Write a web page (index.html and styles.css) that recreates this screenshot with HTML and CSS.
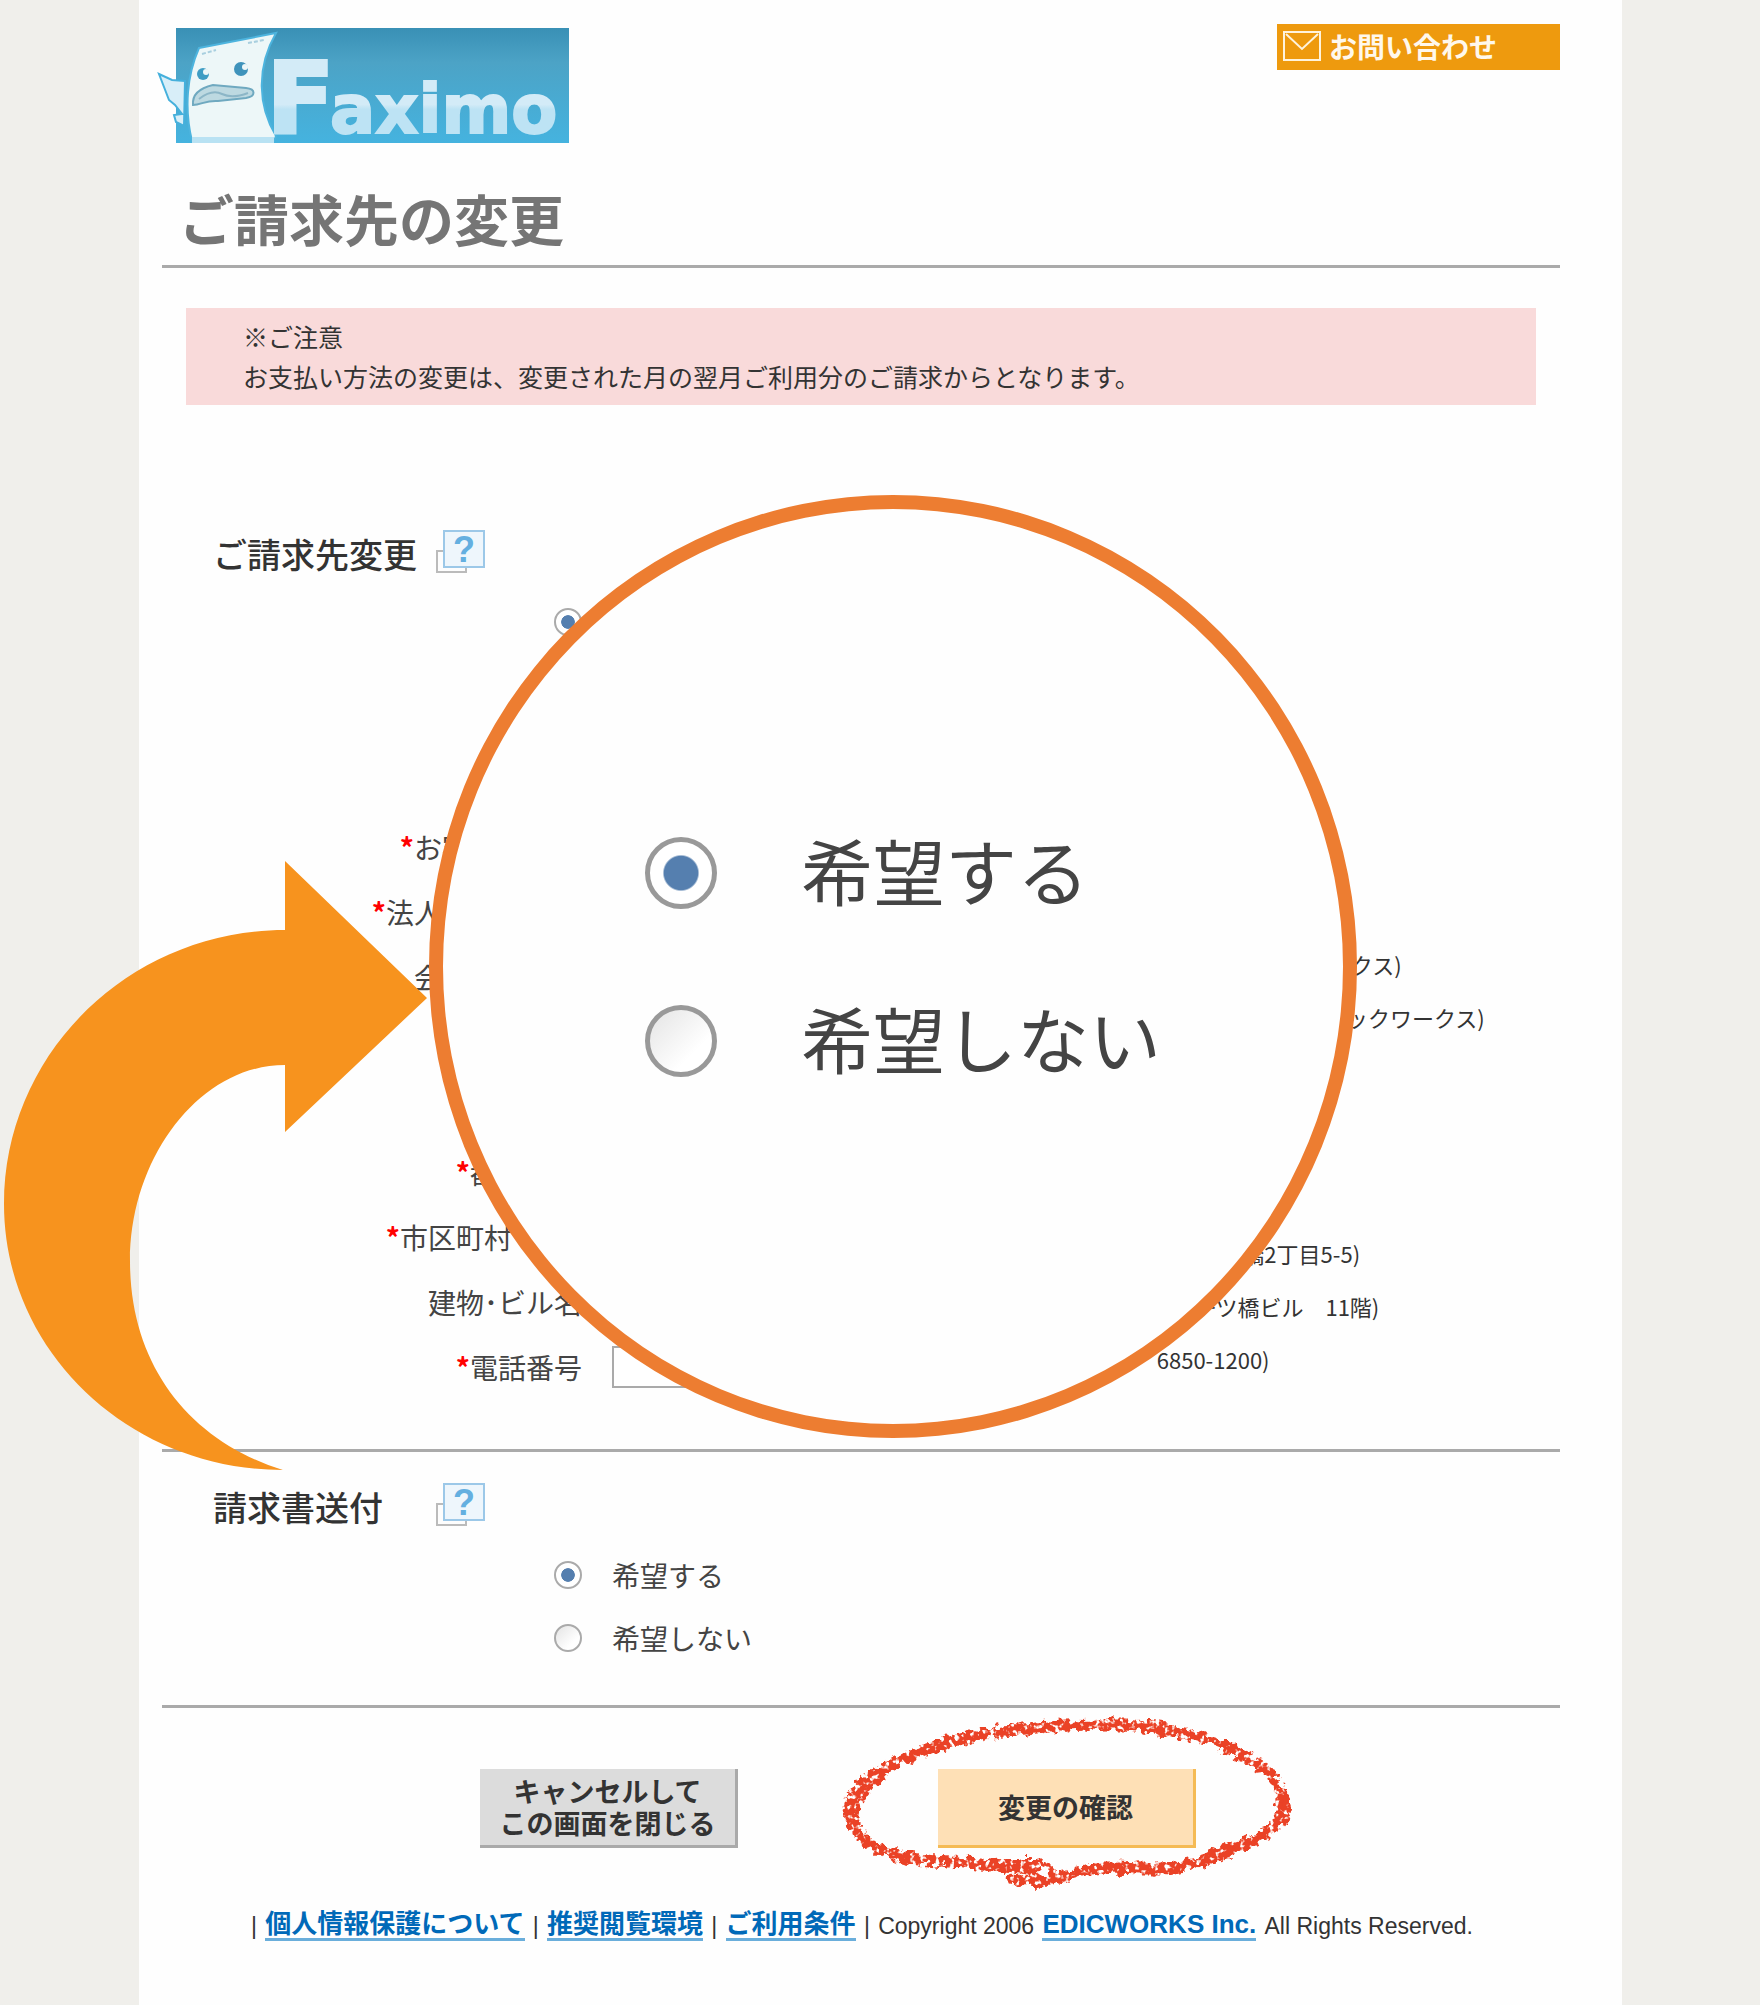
FILE: index.html
```html
<!DOCTYPE html>
<html lang="ja">
<head>
    <meta charset="UTF-8">
    <meta name="viewport" content="width=device-width, initial-scale=1.0">
    <title>ご請求先の変更 - Faximo</title>
    <link rel="stylesheet" href="styles.css">
</head>
<body>
    <div class="sheet">
        <header class="header">
            <svg class="logo" width="411" height="116" viewBox="0 0 411 116" role="img" aria-label="Faximo">
                <defs>
                    <linearGradient id="sea" x1="0" y1="0" x2="0" y2="1">
                        <stop offset="0" stop-color="#3990b5"/>
                        <stop offset="0.3" stop-color="#4ca3c6"/>
                        <stop offset="1" stop-color="#45b3df"/>
                    </linearGradient>
                    <linearGradient id="letters" gradientUnits="userSpaceOnUse" x1="0" y1="0" x2="0" y2="116">
                        <stop offset="0.66" stop-color="#d3ebf7"/>
                        <stop offset="0.7" stop-color="#bde3f4"/>
                    </linearGradient>
                </defs>
                <rect x="18" y="0" width="393" height="115" fill="url(#sea)"/>
                <!-- fish -->
                <path d="M1 46 L14 52 L27 53 L26 98 L18 94 L16 87 L24 86 L17 77 L11 72 L6 59 Z" fill="#d8eef8" stroke="#45b0dc" stroke-width="2"/>
                <path d="M41 20 L118 5 C98 40 100 78 118 108 L116 113 H34 C26 80 29 47 41 20 Z" fill="#edf7f8" stroke="#4db4de" stroke-width="2"/>
                <path d="M34 109 H116 V115 H34 Z" fill="#b9e2f3"/>
                <circle cx="45" cy="46" r="6" fill="#3f9dc4"/>
                <circle cx="48" cy="44" r="3" fill="#edf7f8"/>
                <circle cx="83" cy="41" r="7" fill="#3f93bb"/>
                <circle cx="87" cy="39" r="3" fill="#edf7f8"/>
                <path d="M35 77 C34 66 42 60 55 57 L88 60 C98 61 98 68 88 70 L60 73 C48 72 43 77 35 77 Z" fill="#bdd9e1" stroke="#6fa9c0" stroke-width="2"/>
                <path d="M41 71 Q54 61 64 66 T90 65" fill="none" stroke="#8cb6c7" stroke-width="2"/>
                <path d="M44 26 L58 22 M90 15 L106 12" fill="none" stroke="#a8cfdf" stroke-width="2" stroke-dasharray="4 2"/>
                <g class="logo-text" fill="url(#letters)" stroke="url(#letters)" stroke-linejoin="miter">
                    <text x="109" y="104" font-size="98" stroke-width="4">F</text>
                    <text x="172" y="105" font-size="67" stroke-width="2">aximo</text>
                </g>
            </svg>
            <a class="contact" href="#">
                <svg width="38" height="30" viewBox="0 0 38 30" fill="none" stroke="#fff3dc" stroke-width="2">
                    <rect x="1" y="1" width="36" height="28"/>
                    <path d="M3 3 L19 18 L35 3"/>
                </svg>
                お問い合わせ
            </a>
        </header>

        <h1>ご請求先の変更</h1>

        <div class="notice">
            ※ご注意<br>
            お支払い方法の変更は、変更された月の翌月ご利用分のご請求からとなります。
        </div>

        <form>
            <!-- 請求先 -->
            <section class="billing">
                <div class="section-title">
                    <h2>ご請求先変更</h2>
                    <a href="#" aria-label="ヘルプ">
                        <svg class="help" width="50" height="45" viewBox="0 0 50 45">
                            <rect x="2" y="22" width="29" height="21" fill="#fdfdfd" stroke="#bbb" stroke-width="2"/>
                            <rect x="9" y="2" width="40" height="36" fill="#eef6fc" stroke="#9cc8e8" stroke-width="2"/>
                            <text x="29" y="33" text-anchor="middle" fill="#64afe0">?</text>
                        </svg>
                    </a>
                </div>
                <div class="radio-row">
                    <input class="radio" type="radio" name="change" aria-label="変更する" checked>
                </div>
                <div class="billing-body">
                    <div class="fields">
                        <div class="field"><label for="type"><span class="req">*</span>お客様の区分</label><input id="type" type="text"></div>
                        <div class="field"><label for="corp"><span class="req">*</span>法人個人の区分</label><input id="corp" type="text"></div>
                        <div class="field"><label for="company">会社団体名称</label><input id="company" type="text"></div>
                        <div class="field"><label for="kana">フリガナ</label><input id="kana" type="text"></div>
                        <div class="field"><label for="zip">郵便番号</label><input id="zip" type="text"></div>
                        <div class="field"><label for="pref"><span class="req">*</span>都道府県</label><input id="pref" type="text"></div>
                        <div class="field"><label for="city"><span class="req">*</span>市区町村･番地</label><input id="city" type="text"></div>
                        <div class="field"><label for="building">建物･ビル名</label><input id="building" type="text"></div>
                        <div class="field"><label for="tel"><span class="req">*</span>電話番号</label><input id="tel" type="text"></div>
                    </div>
                    <div class="hints">
                        <div class="hint-group">
                            <p>(例 株式会社エディックワークス)</p>
                            <p>(例カブシキカイシャエディックワークス)</p>
                        </div>
                        <div class="hint-group">
                            <p>(例 千代田区一ツ橋2丁目5-5)</p>
                            <p>(例岩波書店一ツ橋ビル　11階)</p>
                            <p>(例 03　6850-1200)</p>
                        </div>
                    </div>
                </div>
            </section>

            <!-- 請求書送付 -->
            <section class="invoice">
                <div class="section-title">
                    <h2>請求書送付</h2>
                    <a href="#" aria-label="ヘルプ">
                        <svg class="help" width="50" height="45" viewBox="0 0 50 45">
                            <rect x="2" y="22" width="29" height="21" fill="#fdfdfd" stroke="#bbb" stroke-width="2"/>
                            <rect x="9" y="2" width="40" height="36" fill="#eef6fc" stroke="#9cc8e8" stroke-width="2"/>
                            <text x="29" y="33" text-anchor="middle" fill="#64afe0">?</text>
                        </svg>
                    </a>
                </div>
                <label class="radio-row"><input class="radio" type="radio" name="invoice" checked>希望する</label>
                <label class="radio-row"><input class="radio" type="radio" name="invoice">希望しない</label>
            </section>

            <div class="buttons">
                <button type="button" class="btn cancel">キャンセルして<br>この画面を閉じる</button>
                <div class="confirm-wrap">
                    <button type="submit" class="btn confirm">変更の確認</button>
                    <svg class="crayon" width="470" height="190" viewBox="830 1704 470 190" fill="none" stroke="#ea4227" stroke-linecap="round">
                        <defs>
                            <filter id="rough" x="-5%" y="-10%" width="110%" height="120%">
                                <feTurbulence type="fractalNoise" baseFrequency="0.12" numOctaves="3" seed="4" result="n"/>
                                <feDisplacementMap in="SourceGraphic" in2="n" scale="14" xChannelSelector="R" yChannelSelector="G" result="d"/>
                                <feTurbulence type="fractalNoise" baseFrequency="0.2" numOctaves="2" seed="9"/>
                                <feColorMatrix type="matrix" values="0 0 0 0 0  0 0 0 0 0  0 0 0 0 0  0 0 0 -7 4.9"/>
                                <feComposite in="d" operator="in"/>
                            </filter>
                        </defs>
                        <g filter="url(#rough)">
                            <path stroke-width="11" d="M1012 1879 C1040 1886 1065 1876 1085 1871 C1110 1864 1140 1872 1175 1868 C1210 1862 1245 1846 1265 1834 C1285 1818 1288 1798 1272 1778 C1245 1748 1200 1731 1125 1725 C1060 1724 980 1729 925 1750 C880 1767 850 1787 849 1810 C852 1838 875 1850 905 1857 C945 1864 985 1862 1035 1870"/>
                            <path stroke-width="6" d="M1020 1882 C1050 1882 1065 1870 1040 1862 L1005 1862 M862 1835 C848 1812 860 1795 890 1768 C930 1742 960 1732 1010 1728 M1230 1746 C1270 1770 1298 1800 1284 1820 C1270 1838 1240 1842 1212 1852"/>
                        </g>
                    </svg>
                </div>
            </div>
        </form>

        <footer class="footer">
            <span>|</span>
            <a href="#">個人情報保護について</a>
            <span>|</span>
            <a href="#">推奨閲覧環境</a>
            <span>|</span>
            <a href="#">ご利用条件</a>
            <span>|</span>
            <span>Copyright 2006</span>
            <a href="#">EDICWORKS Inc.</a>
            <span>All Rights Reserved.</span>
        </footer>
    </div>

    <!-- 拡大表示 -->
    <svg class="arrow" width="430" height="620" viewBox="0 855 430 620">
        <path fill="#f7931e" d="M285 861 L427 998 L285 1132 V1065 C200 1065 130 1157 130 1261 C130 1366 190 1441 283 1470 C129 1470 4 1351 4 1204 C4 1053 130 930 285 930 Z"/>
    </svg>
    <div class="magnifier">
        <label class="zoom-row"><input class="radio" type="radio" name="zoom" checked><span>希望する</span></label>
        <label class="zoom-row"><input class="radio" type="radio" name="zoom"><span>希望しない</span></label>
    </div>
</body>
</html>
```

FILE: styles.css
```css
* {
    box-sizing: border-box;
}

body {
    position: relative;
    margin: 0;
    background: #f0efeb;
    color: #444;
    font-family: "Noto Sans CJK JP", sans-serif;
    font-size: 28px;
}

h1, h2, p {
    margin: 0;
}

.sheet {
    min-height: 100vh;
    margin: 0 138px 0 139px;
    padding: 24px 62px 64px 23px;
    background: #fefefe;
}

.header {
    display: flex;
    justify-content: space-between;
    align-items: flex-start;
}

.logo {
    display: block;
    overflow: visible;
    margin: 4px 0 0 -4px;
}

.logo-text {
    font-family: "DejaVu Sans", sans-serif;
    font-weight: bold;
}

.contact {
    display: flex;
    align-items: center;
    gap: 8px;
    width: 283px;
    height: 46px;
    padding: 0 0 2px 6px;
    background: #ee9a0e;
    color: #fff8ec;
    font-weight: bold;
    text-decoration: none;
}

h1 {
    margin-top: 33px;
    padding: 0 0 8px 17px;
    border-bottom: 3px solid #aaa;
    color: #757575;
    font-size: 55px;
    line-height: 80px;
}

.notice {
    margin: 40px 24px 0;
    padding: 8px 57px 9px;
    background: #f9dada;
    color: #333;
    font-size: 25px;
    line-height: 40px;
}

.billing {
    margin-top: 126px;
    padding-bottom: 50px;
    border-bottom: 3px solid #aaa;
}

.invoice {
    padding: 32px 0 36px;
    border-bottom: 3px solid #aaa;
}

.section-title {
    display: flex;
    align-items: center;
    height: 44px;
    padding-left: 51px;
}

.section-title h2 {
    width: 222px;
    color: #333;
    font-size: 34px;
    font-weight: 500;
}

.help {
    display: block;
    margin-bottom: 4px;
}

.help text {
    font-family: "Liberation Sans", sans-serif;
    font-size: 36px;
    font-weight: bold;
}

.radio {
    flex: none;
    appearance: none;
    width: 28px;
    height: 28px;
    margin: 0;
    border: 2px solid #aaa;
    border-radius: 50%;
    background: linear-gradient(135deg, #e4e4e4, #fff 70%);
}

.radio:checked {
    background: radial-gradient(circle, #557faf 0 38%, #fff 42%);
}

.radio-row {
    display: flex;
    align-items: center;
    gap: 30px;
    height: 63px;
    padding-left: 392px;
}

.section-title + .radio-row {
    margin-top: 15px;
}

.billing-body {
    display: flex;
    margin-top: 161px;
}

.field {
    display: flex;
    align-items: center;
    gap: 30px;
    height: 65px;
}

.field label {
    width: 420px;
    text-align: right;
}

.field input {
    width: 420px;
    height: 42px;
    border: 2px solid #aaa;
    background: #fff;
}

.req {
    color: #f00;
    font-weight: bold;
}

.hints {
    padding: 124px 0 0 44px;
    color: #333;
    font-size: 22px;
    line-height: 53px;
    white-space: nowrap;
}

.hint-group + .hint-group {
    margin-top: 183px;
}

.buttons {
    display: flex;
    gap: 200px;
    padding: 61px 0 0 318px;
}

.btn {
    width: 258px;
    height: 79px;
    padding: 0;
    border: 0 solid;
    border-width: 0 3px 3px 0;
    color: #333;
    font-family: inherit;
    font-size: 27px;
    font-weight: bold;
    line-height: 32px;
}

.cancel {
    border-color: #aaa;
    background: #dcdcdc;
}

.confirm {
    border-color: #f5bb55;
    background: #fee0b6;
}

.confirm-wrap {
    position: relative;
}

/* hand drawn ring round the confirm button */
.crayon {
    position: absolute;
    top: -65px;
    left: -108px;
    pointer-events: none;
}

.footer {
    display: flex;
    justify-content: space-between;
    align-items: center;
    margin-top: 62px;
    padding: 0 87px 0 89px;
    color: #333;
    font-family: "Liberation Sans", "Noto Sans CJK JP", sans-serif;
    font-size: 23px;
    line-height: 30px;
    white-space: nowrap;
}

.footer a {
    border-bottom: 3px solid #6aaedb;
    color: #0069b8;
    font-size: 26px;
    font-weight: bold;
    line-height: 28px;
    text-decoration: none;
}

.arrow {
    position: absolute;
    top: 855px;
    left: 0;
}

.magnifier {
    position: absolute;
    top: 495px;
    left: 429px;
    width: 928px;
    height: 943px;
    padding: 280px 0 0 202px;
    border: 14px solid #ed7d31;
    border-radius: 50%;
    background: #fefefe;
}

.zoom-row {
    display: flex;
    align-items: center;
    gap: 84px;
    height: 168px;
    font-size: 72px;
}

.zoom-row span {
    padding-bottom: 10px;
}

.zoom-row .radio {
    width: 72px;
    height: 72px;
    border: 5px solid #999;
}
```
